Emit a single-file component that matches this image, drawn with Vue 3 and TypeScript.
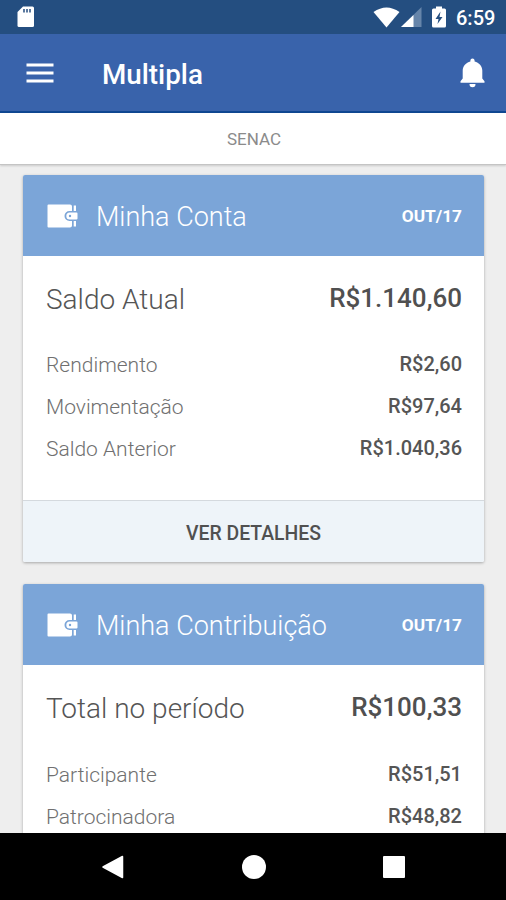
<script setup lang="ts">
interface Entry {
  label: string
  value: string
}

interface Account {
  title: string
  period: string
  total: Entry
  entries: Entry[]
  action?: string
}

const accounts: Account[] = [
  {
    title: 'Minha Conta',
    period: 'OUT/17',
    total: { label: 'Saldo Atual', value: 'R$1.140,60' },
    entries: [
      { label: 'Rendimento', value: 'R$2,60' },
      { label: 'Movimentação', value: 'R$97,64' },
      { label: 'Saldo Anterior', value: 'R$1.040,36' },
    ],
    action: 'VER DETALHES',
  },
  {
    title: 'Minha Contribuição',
    period: 'OUT/17',
    total: { label: 'Total no período', value: 'R$100,33' },
    entries: [
      { label: 'Participante', value: 'R$51,51' },
      { label: 'Patrocinadora', value: 'R$48,82' },
    ],
  },
]
</script>

<template>
  <div class="screen">
    <div class="status">
      <svg class="sd" viewBox="0 0 17 22">
        <path d="M6 0.5H15.5Q17 .5 17 2V19.5Q17 21 15.5 21H2Q.5 21 .5 19.5V6Z" fill="#fff" />
        <path d="M7 3V6.5M10 3V6.5M13 3V6.5" stroke="#244e80" stroke-width="1.5" />
      </svg>
      <div class="indicators">
        <svg class="wifi" viewBox="0 0 27 21">
          <path d="M0.5 5Q13.5 -4 26.5 5L13.5 20.5Z" fill="#fff" />
        </svg>
        <svg class="signal" viewBox="0 0 21 20">
          <path d="M20.5 0V20H0Z" fill="#6685aa" />
          <path d="M12.5 8V20H0Z" fill="#fff" />
        </svg>
        <svg class="battery" viewBox="0 0 14 22">
          <path d="M4 0.5H10V2.5H12.5Q14 2.5 14 4V20Q14 21.5 12.5 21.5H1.5Q0 21.5 0 20V4Q0 2.5 1.5 2.5H4Z" fill="#fff" />
          <path d="M8.5 5.5L3.5 13H6.5L5.5 18L10.5 11H7.5Z" fill="#244e80" />
        </svg>
        <span class="clock">6:59</span>
      </div>
    </div>

    <header class="appbar">
      <svg class="menu" viewBox="0 0 28 20">
        <path d="M.5 2H27.5M.5 10H27.5M.5 18H27.5" stroke="#fff" stroke-width="3.2" />
      </svg>
      <h1 class="brand">Multipla</h1>
      <svg class="bell" viewBox="0 0 25 30">
        <path d="M12.5 0.5C13.8 .5 14.4 1.3 14.6 2.6V3.5C19 4.7 22.3 8.3 22.3 12.5V20.5L24.5 23.2V24.7H.5V23.2L2.7 20.5V12.5C2.7 8.3 6 4.7 10.4 3.5V2.6C10.6 1.3 11.2 .5 12.5 .5ZM9.5 26H15.5A3 3.2 0 0 1 9.5 26Z" fill="#fff" />
      </svg>
    </header>

    <div class="company">SENAC</div>

    <main class="content">
      <section v-for="account in accounts" :key="account.title" class="card">
        <div class="card-head">
          <svg class="wallet" viewBox="0 0 31 24">
            <path d="M1.5 .5H23Q25 .5 25 2.5V7H22.5A5 5 0 0 0 22.5 17H25V21.5Q25 23.5 23 23.5H1.5Q.5 23.5 .5 22.5V1.5Q.5 .5 1.5 .5Z" fill="#fff" />
            <path d="M26.7 1.5H29V7H26.7ZM26.7 17H29V22.5H26.7Z" fill="#fff" />
            <path fill-rule="evenodd" d="M22.8 8.5H29.5Q30.5 8.5 30.5 9.5V14.5Q30.5 15.5 29.5 15.5H22.8A3.5 3.5 0 0 1 22.8 8.5ZM23 10.8A1.2 1.2 0 1 0 23 13.2A1.2 1.2 0 1 0 23 10.8Z" fill="#fff" />
          </svg>
          <h2 class="title">{{ account.title }}</h2>
          <span class="period">{{ account.period }}</span>
        </div>
        <div class="card-body">
          <div class="total">
            <span class="total-label">{{ account.total.label }}</span>
            <span class="total-value">{{ account.total.value }}</span>
          </div>
          <div v-for="entry in account.entries" :key="entry.label" class="row">
            <span class="label">{{ entry.label }}</span>
            <span class="value">{{ entry.value }}</span>
          </div>
        </div>
        <button v-if="account.action" class="details" type="button">{{ account.action }}</button>
      </section>
    </main>

    <nav class="navbar">
      <svg class="nav-icon" viewBox="0 0 24 24">
        <path d="M21.5 1.5V22.5L2 12Z" fill="#fff" stroke="#fff" stroke-width="1.5" stroke-linejoin="round" />
      </svg>
      <svg class="nav-icon" viewBox="0 0 24 24"><circle cx="12" cy="12" r="12" fill="#fff" /></svg>
      <svg class="nav-icon" viewBox="0 0 24 24"><rect x="1" y="1" width="22" height="22" rx="1" fill="#fff" /></svg>
    </nav>
  </div>
</template>

<style>
body {
  margin: 0;
}
</style>

<style scoped>
.screen {
  display: flex;
  flex-direction: column;
  width: 506px;
  height: 900px;
  overflow: hidden;
  background: #eee;
  font-family: Roboto, "Liberation Sans", sans-serif;
}
svg {
  display: block;
  flex: none;
}
.status {
  flex: none;
  display: flex;
  align-items: center;
  justify-content: space-between;
  height: 34px;
  box-sizing: border-box;
  padding: 0 11px 0 17px;
  background: #244e80;
}
.sd {
  width: 17px;
  height: 22px;
}
.indicators {
  display: flex;
  align-items: center;
}
.wifi {
  width: 27px;
  height: 21px;
}
.signal {
  width: 21px;
  height: 20px;
  margin-left: 1px;
}
.battery {
  width: 14px;
  height: 22px;
  margin-left: 10px;
}
.clock {
  width: 39px;
  margin-left: 10px;
  padding-top: 2px;
  color: #fff;
  font-size: 20px;
  font-weight: 500;
  line-height: 32px;
}
.appbar {
  flex: none;
  display: flex;
  align-items: center;
  height: 79px;
  box-sizing: border-box;
  padding: 1px 21px 0 26px;
  background: #3963ab;
  border-bottom: 2px solid #104792;
}
.menu {
  width: 28px;
  height: 20px;
}
.brand {
  flex: 1;
  margin: 3px 0 0 48px;
  color: #fff;
  font-size: 27.8px;
  font-weight: 500;
  line-height: 32px;
}
.bell {
  width: 25px;
  height: 30px;
}
.company {
  flex: none;
  height: 51px;
  padding-left: 2px;
  border-bottom: 1px solid #c4c4c4;
  box-shadow: 0 1px 2px rgba(0, 0, 0, 0.15);
  background: #fff;
  color: #8b8b8b;
  font-size: 17px;
  line-height: 52px;
  text-align: center;
}
.content {
  flex: 1;
  min-height: 0;
  display: flex;
  flex-direction: column;
  gap: 22px;
  padding: 10px 22px 0 23px;
  overflow: hidden;
}
.card {
  flex: none;
  border-radius: 2px;
  background: #fff;
  box-shadow: 0 1px 3px rgba(0, 0, 0, 0.3);
  overflow: hidden;
}
.card-head {
  display: flex;
  align-items: center;
  height: 81px;
  box-sizing: border-box;
  padding: 1px 22px 0 24px;
  background: #7ba5d8;
  color: #fff;
}
.wallet {
  width: 31px;
  height: 24px;
}
.title {
  flex: 1;
  margin: 2px 0 0 18px;
  font-size: 27px;
  font-weight: 300;
  line-height: 34px;
}
.period {
  font-size: 17.3px;
  font-weight: 700;
}
.card-body {
  height: 244px;
  box-sizing: border-box;
  padding: 22px 22px 0 23px;
}
.total,
.row {
  display: flex;
  align-items: center;
  justify-content: space-between;
}
.total {
  height: 42px;
  margin-bottom: 24px;
}
.card:last-child .total {
  margin-bottom: 25px;
}
.total-label {
  color: #555;
  font-size: 28px;
  font-weight: 300;
}
.total-value {
  padding-bottom: 2px;
  color: #505050;
  font-size: 26px;
  font-weight: 500;
}
.row {
  height: 42px;
}
.label {
  color: #707070;
  font-size: 21px;
  font-weight: 300;
}
.value {
  padding-bottom: 2px;
  color: #555;
  font-size: 20px;
  font-weight: 500;
}
.details {
  display: block;
  width: 100%;
  height: 62px;
  padding: 3px 0 0;
  border: 0;
  border-top: 1px solid #d4d9de;
  background: #eef4f9;
  color: #505050;
  font: 500 19.4px Roboto, "Liberation Sans", sans-serif;
}
.navbar {
  flex: none;
  display: flex;
  align-items: center;
  justify-content: center;
  gap: 116.5px;
  height: 67px;
  padding-left: 1px;
  background: #000;
}
.nav-icon {
  width: 24px;
  height: 24px;
}
</style>
